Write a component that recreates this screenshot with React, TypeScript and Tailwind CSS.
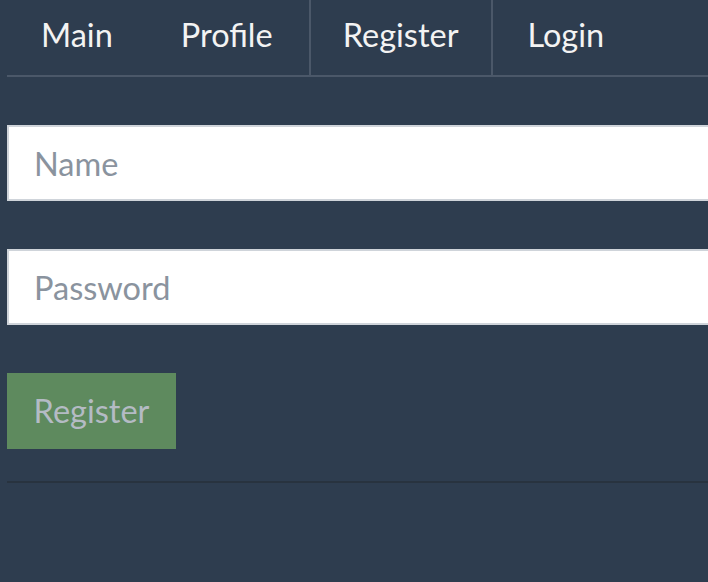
import React from "react";

export default function App() {
  return (
    <div
      className="w-[708px] h-[582px] overflow-hidden bg-[#2e3d4f]"
      style={{ fontFamily: "Lato, 'Noto Sans', sans-serif" }}
    >
      <div className="pl-[7px]">
        <nav className="flex h-[77px] border-b-2 border-[#4b5869] text-[32.5px] text-[#f3f3f3]">
          <div className="pl-[34px] pr-[34px] flex items-center h-[75px] pb-[4px]">Main</div>
          <div className="pl-[34px] pr-[36px] flex items-center h-[75px] pb-[4px]">Profile</div>
          <div className="pl-[32px] pr-[33px] flex items-center h-[75px] pb-[4px] border-x-2 border-[#4b5869]">Register</div>
          <div className="pl-[34px] pr-[35px] flex items-center h-[75px] pb-[4px]">Login</div>
        </nav>
        <div className="flex flex-col pt-[48px]">
          <input
            placeholder="Name"
            className="h-[76px] w-[720px] bg-white border-2 border-[#cfd4da] px-[25px] text-[32.5px] text-[#333] placeholder:text-[#8a939e] outline-none"
            style={{ fontFamily: "Lato, 'Noto Sans', sans-serif" }}
          />
          <input
            placeholder="Password"
            className="mt-[48px] h-[76px] w-[720px] bg-white border-2 border-[#cfd4da] px-[25px] text-[32.5px] text-[#333] placeholder:text-[#8a939e] outline-none"
            style={{ fontFamily: "Lato, 'Noto Sans', sans-serif" }}
          />
          <div className="mt-[48px]">
            <button
              className="h-[76px] w-[169px] bg-[#5e8a5e] text-[32.5px] text-[#b4bbc4] flex items-center justify-center"
              style={{ fontFamily: "Lato, 'Noto Sans', sans-serif" }}
            >
              Register
            </button>
          </div>
          <div className="mt-[32px] h-[2px] bg-[#28333f]" />
        </div>
      </div>
    </div>
  );
}
